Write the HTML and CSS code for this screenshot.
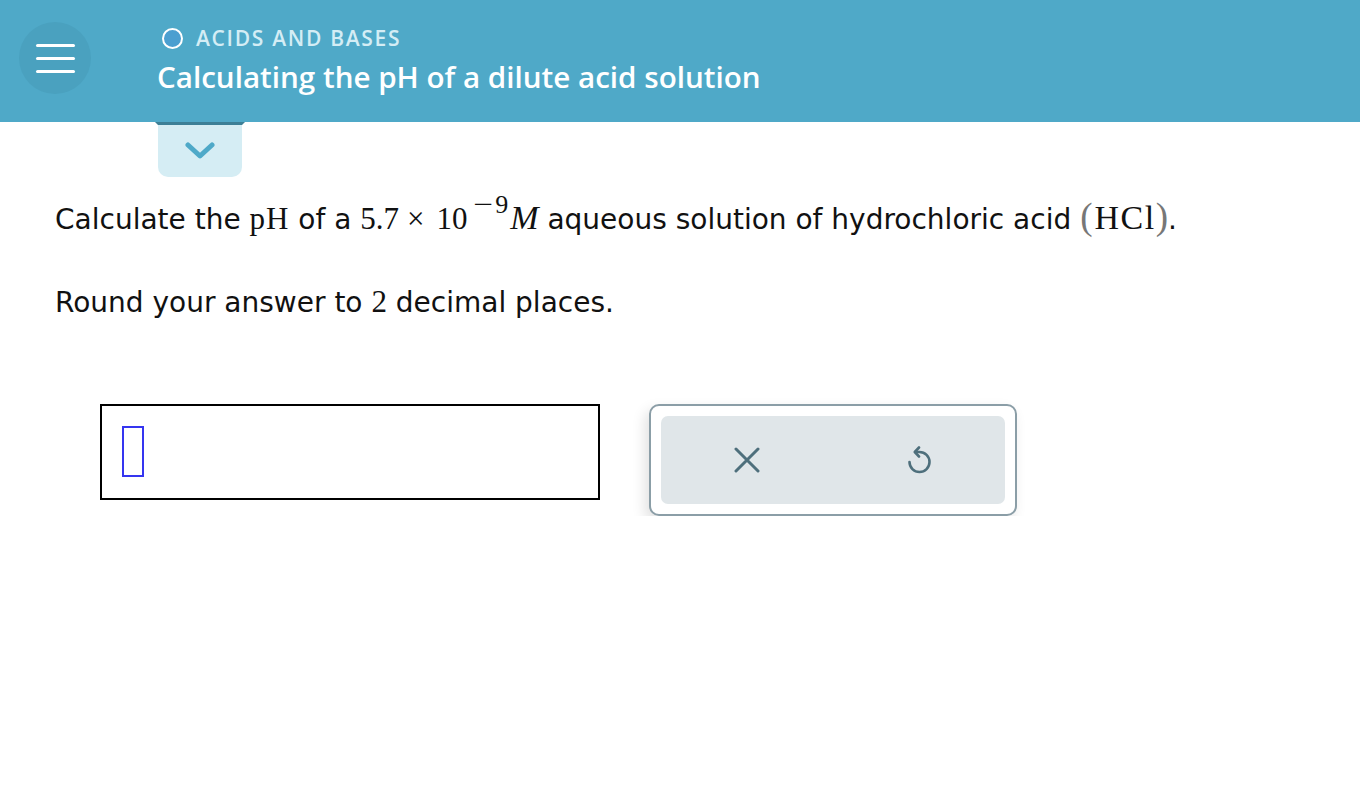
FILE: index.html
```html
<!DOCTYPE html>
<html>
<head>
<meta charset="utf-8">
<link rel="stylesheet" href="styles.css">
</head>
<body>
<header class="topbar">
  <button class="menu-btn" aria-label="menu">
    <span></span><span></span><span></span>
  </button>
  <div class="titles">
    <div class="topic"><span class="topic-dot"></span>ACIDS AND BASES</div>
    <div class="title">Calculating the pH of a dilute acid solution</div>
  </div>
</header>
<div class="tab">
  <div class="tab-edge"></div>
  <div class="tab-body">
    <svg width="30" height="18" viewBox="0 0 30 18"><path d="M3 3 L15 14 L27 3" fill="none" stroke="#4ea9c8" stroke-width="5" stroke-linecap="round" stroke-linejoin="round"/></svg>
  </div>
</div>
<main class="question">
  <p class="line1">Calculate the <span class="m ph">pH</span> of a <span class="m">5.7<span class="times">×</span>10<sup class="sup"><span class="minus">−</span>9</sup><i class="mi">M</i></span> aqueous solution of hydrochloric acid <span class="m"><span class="paren">(</span><span class="hcl">HCl</span><span class="paren">)</span></span>.</p>
  <p class="line2">Round your answer to <span class="m">2</span> decimal places.</p>
  <div class="answer">
    <div class="input-box"><span class="cursor"></span></div>
    <div class="tools">
      <div class="tools-inner">
        <button class="tool" aria-label="clear">
          <svg width="26" height="26" viewBox="0 0 26 26"><path d="M2 2 L24 24 M24 2 L2 24" stroke="#4e6f7c" stroke-width="3" stroke-linecap="round"/></svg>
        </button>
        <button class="tool" aria-label="undo">
          <svg width="28" height="28" viewBox="0 0 28 28"><path d="M4.5 16 A10 10 0 1 0 14.5 6 H10.5" fill="none" stroke="#4e6f7c" stroke-width="2.6" stroke-linecap="round"/><path d="M14 1.5 L9.8 6 L14 10.5" fill="none" stroke="#4e6f7c" stroke-width="2.6" stroke-linecap="round" stroke-linejoin="round"/></svg>
        </button>
      </div>
    </div>
  </div>
</main>
</body>
</html>
```
FILE: styles.css
```css
* { box-sizing: border-box; }
body {
  margin: 0;
  background: #fff;
  font-family: "DejaVu Sans", Verdana, sans-serif;
  color: #111;
}
.topbar {
  height: 122px;
  background: #4fa9c8;
  display: flex;
  align-items: flex-start;
  padding-left: 19px;
}
.menu-btn {
  width: 72px;
  height: 72px;
  margin-top: 22px;
  border-radius: 50%;
  border: none;
  background: #4aa1bf;
  display: flex;
  flex-direction: column;
  align-items: center;
  justify-content: center;
  gap: 10px;
  padding: 0;
}
.menu-btn span {
  display: block;
  width: 39px;
  height: 3px;
  border-radius: 2px;
  background: #fff;
}
.titles {
  margin-left: 66px;
  padding-top: 23px;
  display: flex;
  flex-direction: column;
}
.topic {
  display: flex;
  align-items: center;
  font-family: "Open Sans", "Lato", sans-serif;
  font-size: 21px;
  font-weight: 600;
  color: #d4edf5;
  height: 30px;
  margin-left: 5px;
  letter-spacing: 1.7px;
}
.topic-dot {
  width: 21px;
  height: 21px;
  border-radius: 50%;
  border: 2px solid #fff;
  background: #4b9fd0;
  margin-right: 13px;
}
.title {
  font-family: "Open Sans", "Lato", sans-serif;
  font-size: 29.6px;
  font-weight: 600;
  color: #fff;
  margin-top: 2px;
  line-height: 44px;
}
.tab {
  margin-left: 155px;
  width: 90px;
}
.tab-edge {
  height: 0;
  border-top: 3px solid #3c7f96;
  border-left: 3px solid transparent;
  border-right: 3px solid transparent;
}
.tab-body {
  margin: 0 3px;
  height: 52px;
  background: #d5edf4;
  border-radius: 0 0 10px 10px;
  display: flex;
  align-items: center;
  justify-content: center;
}
.question {
  padding-left: 55px;
}
.question p {
  margin: 0;
  font-size: 28px;
}
.line1 { margin-top: 10px !important; line-height: 60px; }
.line2 { margin-top: 32px !important; line-height: 40px; }
.m {
  font-family: "Liberation Serif", "Times New Roman", serif;
  font-size: 31px;
}
.ph { letter-spacing: 1px; }
.times { font-size: 31px; margin: 0 12px 0 8px; }
.sup {
  font-size: 26px;
  vertical-align: 0;
  position: relative;
  top: -16px;
  margin-left: 8px;
  margin-right: 2px;
  line-height: 0;
}
.minus { display: inline-block; transform: scaleX(1.35); margin-right: 5px; }
.mi { font-style: italic; font-size: 34px; }
.hcl { font-size: 34px; letter-spacing: 1.5px; margin-left: 2px; }
.paren { color: #777; font-size: 37px; }
.answer {
  display: flex;
  align-items: flex-start;
  gap: 49px;
  margin-top: 81px;
  margin-left: 45px;
}
.input-box {
  width: 500px;
  height: 96px;
  border: 2px solid #000;
  padding: 20px 0 0 20px;
}
.cursor {
  display: block;
  width: 22px;
  height: 51px;
  border: 2px solid #3535f0;
}
.tools {
  width: 368px;
  height: 112px;
  border: 2px solid #8b9ea7;
  border-radius: 10px;
  padding: 10px;
  background: #fff;
  box-shadow: -4px 6px 14px rgba(0,0,0,0.12);
}
.tools-inner {
  height: 100%;
  background: #e0e6e9;
  border-radius: 7px;
  display: flex;
}
.tool {
  flex: 1;
  border: none;
  background: transparent;
  display: flex;
  align-items: center;
  justify-content: center;
  padding: 0;
}
```
